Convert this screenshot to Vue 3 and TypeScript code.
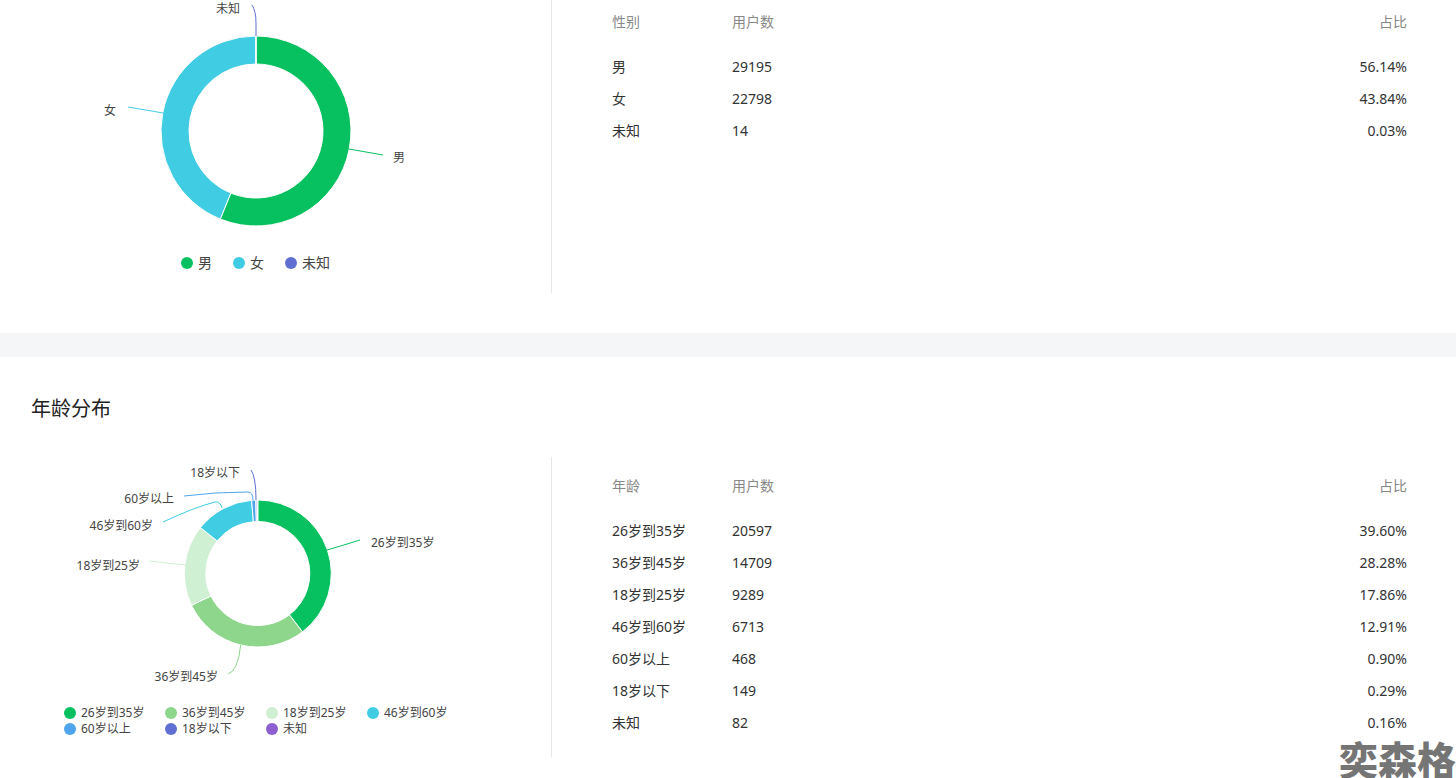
<script setup lang="ts">
interface Seg { name: string; users: number; pct: string; color: string }
interface Leader { d: string; color: string; label: string; x: number; y: number; anchor: string }
interface Chart {
  title?: string; head: string; cx: number; cy: number; r0: number; r1: number;
  segs: Seg[]; leaders: Leader[]; legendClass: string
}

const G = '#07c160', LG = '#8dd68c', PG = '#cff0d3', C = '#40cde4', B = '#4ea5ee', I = '#5f6fd2', P = '#8e5fd0'

const charts: Chart[] = [
  {
    head: '性别', cx: 256, cy: 138, r0: 67, r1: 95, legendClass: 'legend-one',
    segs: [
      { name: '男', users: 29195, pct: '56.14%', color: G },
      { name: '女', users: 22798, pct: '43.84%', color: C },
      { name: '未知', users: 14, pct: '0.03%', color: I },
    ],
    leaders: [
      { d: 'M349 156 Q366 159 383 162', color: G, label: '男', x: 393, y: 169, anchor: 'start' },
      { d: 'M163 120 Q146 117 128 114', color: C, label: '女', x: 116, y: 122, anchor: 'end' },
      { d: 'M256 43 L256 30 Q256 18 252 12', color: I, label: '未知', x: 240, y: 20, anchor: 'end' },
    ],
  },
  {
    title: '年龄分布', head: '年龄', cx: 257.8, cy: 116.5, r0: 52, r1: 73.5, legendClass: 'legend-many',
    segs: [
      { name: '26岁到35岁', users: 20597, pct: '39.60%', color: G },
      { name: '36岁到45岁', users: 14709, pct: '28.28%', color: LG },
      { name: '18岁到25岁', users: 9289, pct: '17.86%', color: PG },
      { name: '46岁到60岁', users: 6713, pct: '12.91%', color: C },
      { name: '60岁以上', users: 468, pct: '0.90%', color: B },
      { name: '18岁以下', users: 149, pct: '0.29%', color: I },
      { name: '未知', users: 82, pct: '0.16%', color: P },
    ],
    leaders: [
      { d: 'M327 93 Q344 88 360 83', color: G, label: '26岁到35岁', x: 371, y: 90, anchor: 'start' },
      { d: 'M240.7 188 Q238 214 228 217', color: LG, label: '36岁到45岁', x: 218, y: 224, anchor: 'end' },
      { d: 'M185 108 Q167 106 149 104', color: PG, label: '18岁到25岁', x: 140, y: 113, anchor: 'end' },
      { d: 'M222 51 Q220 44 215 45 Q195 50 163 65', color: C, label: '46岁到60岁', x: 153, y: 73, anchor: 'end' },
      { d: 'M253 43 Q253 35 248 35 Q215 35 184 39', color: B, label: '60岁以上', x: 174, y: 46, anchor: 'end' },
      { d: 'M256 43 Q256 20 251 13', color: I, label: '18岁以下', x: 240, y: 20, anchor: 'end' },
    ],
  },
]

function point(c: Chart, r: number, a: number): string {
  const x = c.cx + r * Math.sin(a)
  const y = c.cy - r * Math.cos(a)
  return `${x.toFixed(2)} ${y.toFixed(2)}`
}

function arcs(c: Chart) {
  const total = c.segs.reduce((s, x) => s + x.users, 0)
  let start = 0
  return c.segs.map((s) => {
    const end = start + (s.users / total) * Math.PI * 2
    const big = end - start > Math.PI ? 1 : 0
    const d = `M${point(c, c.r1, start)} A${c.r1} ${c.r1} 0 ${big} 1 ${point(c, c.r1, end)} L${point(c, c.r0, end)} A${c.r0} ${c.r0} 0 ${big} 0 ${point(c, c.r0, start)} Z`
    start = end
    return { d, color: s.color }
  })
}
</script>

<template>
  <div class="page">
    <div class="scroller">
      <section v-for="c in charts" :key="c.head" class="section">
        <h2 v-if="c.title" class="title">{{ c.title }}</h2>
        <div class="panel">
          <div class="chart">
            <svg class="donut" width="512" height="240" viewBox="0 0 512 240">
              <path v-for="(a, i) in arcs(c)" :key="i" :d="a.d" :fill="a.color" stroke="#fff" stroke-width="1" />
              <path v-for="l in c.leaders" :key="l.label" :d="l.d" :stroke="l.color" fill="none" stroke-width="1" />
              <text v-for="l in c.leaders" :key="'t' + l.label" :x="l.x" :y="l.y" :text-anchor="l.anchor" class="label">{{ l.label }}</text>
            </svg>
            <div class="legend" :class="c.legendClass">
              <div v-for="s in c.segs" :key="s.name" class="legend-item">
                <i class="dot" :style="{ background: s.color }"></i>
                <span>{{ s.name }}</span>
              </div>
            </div>
          </div>
          <div class="table">
            <div class="row head">
              <span>{{ c.head }}</span><span>用户数</span><span class="pct">占比</span>
            </div>
            <div v-for="s in c.segs" :key="s.name" class="row">
              <span>{{ s.name }}</span><span>{{ s.users }}</span><span class="pct">{{ s.pct }}</span>
            </div>
          </div>
        </div>
      </section>
    </div>
    <div class="watermark">奕森格</div>
  </div>
</template>

<style>
html, body { margin: 0; overflow: hidden; background: #fff; }
</style>

<style scoped>
.page {
  position: relative;
  width: 1456px;
  height: 778px;
  overflow: hidden;
  background: #f5f6f8;
  font-family: "Noto Sans", "Noto Sans CJK SC", sans-serif;
  color: #333;
}
.scroller { margin-top: -7px; display: flex; flex-direction: column; gap: 24px; }
.section { background: #fff; padding-bottom: 40px; }
.title {
  margin: 0;
  height: 100px;
  box-sizing: border-box;
  padding: 38px 0 0 31px;
  font-size: 20px;
  line-height: 28px;
  font-weight: 400;
  color: #222;
}
.panel { display: flex; height: 300px; }
.chart {
  box-sizing: border-box;
  width: 552px;
  height: 300px;
  padding-bottom: 21px;
  border-right: 1px solid #e6e6e6;
  display: flex;
  flex-direction: column;
  justify-content: space-between;
}
.donut { display: block; overflow: visible; }
.label { font-size: 12px; fill: #444; }
.legend { width: 511px; display: flex; justify-content: center; }
.legend-one { gap: 21px; font-size: 14px; line-height: 16px; margin-bottom: 1px; }
.legend-many {
  width: 512px;
  display: grid;
  grid-template-columns: repeat(4, 81px);
  justify-content: center;
  column-gap: 20px;
  font-size: 12px;
  line-height: 16px;
  margin-bottom: -1px;
}
.legend-item { display: flex; align-items: center; gap: 5px; color: #444; white-space: nowrap; }
.dot { width: 12px; height: 12px; border-radius: 50%; flex: none; }
.table { flex: 1; padding: 19px 49px 0 60px; font-size: 14px; color: #333; }
.row { display: grid; grid-template-columns: 120px 1fr auto; height: 32px; line-height: 32px; }
.row.head { height: 20px; line-height: 20px; margin-bottom: 19px; color: #888; }
.pct { text-align: right; }
.watermark {
  position: absolute;
  right: 0;
  bottom: 1px;
  width: 117px;
  height: 37px;
  font-size: 39px;
  line-height: 37px;
  font-weight: 900;
  white-space: nowrap;
  color: #757575;
  font-family: "Noto Sans CJK SC", sans-serif;
}
</style>
